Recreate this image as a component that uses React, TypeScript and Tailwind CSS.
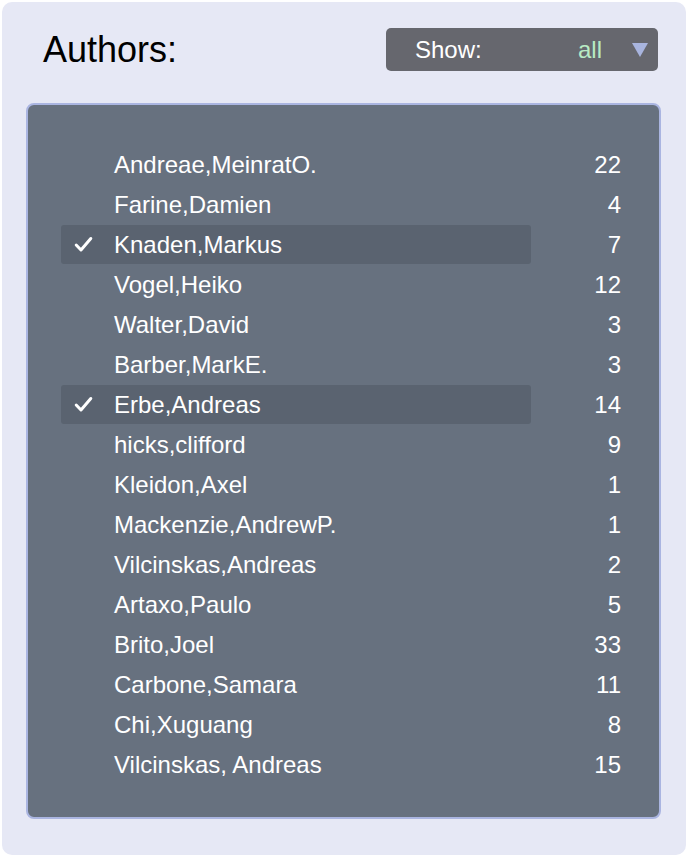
const authors: { name: string; count: number; selected?: boolean }[] = [
  { name: 'Andreae,MeinratO.', count: 22 },
  { name: 'Farine,Damien', count: 4 },
  { name: 'Knaden,Markus', count: 7, selected: true },
  { name: 'Vogel,Heiko', count: 12 },
  { name: 'Walter,David', count: 3 },
  { name: 'Barber,MarkE.', count: 3 },
  { name: 'Erbe,Andreas', count: 14, selected: true },
  { name: 'hicks,clifford', count: 9 },
  { name: 'Kleidon,Axel', count: 1 },
  { name: 'Mackenzie,AndrewP.', count: 1 },
  { name: 'Vilcinskas,Andreas', count: 2 },
  { name: 'Artaxo,Paulo', count: 5 },
  { name: 'Brito,Joel', count: 33 },
  { name: 'Carbone,Samara', count: 11 },
  { name: 'Chi,Xuguang', count: 8 },
  { name: 'Vilcinskas, Andreas', count: 15 },
]

const Check = () => (
  <svg width="19" height="17" viewBox="0 0 19 17" fill="none">
    <path d="M2.2 9 L7 14 L16.8 2.5" stroke="white" strokeWidth="3" strokeLinecap="round" strokeLinejoin="round" />
  </svg>
)

export default function App() {
  return (
    <div className="min-h-screen bg-white p-[2px]" style={{ fontFamily: '"Liberation Sans", Arial, sans-serif' }}>
      <div className="w-[684px] h-[853px] rounded-[10px] bg-[#e6e8f5] pl-[24px] pr-[25px] pt-[26px]">
        <div className="flex items-center justify-between pr-[3px]">
          <h1 className="ml-[17px] text-[36px] leading-none text-black">Authors:</h1>
          <button className="flex h-[43px] w-[272px] items-center rounded-[5px] bg-[#66676e] pl-[29px] pr-[10px] text-[24px] text-white">
            <span>Show:</span>
            <span className="ml-auto mr-[30px] text-[#b8eac4]">all</span>
            <svg width="16" height="14" viewBox="0 0 16 14">
              <path d="M0 0 H16 L8 14 Z" fill="#a8b4de" />
            </svg>
          </button>
        </div>

        <div className="mt-[32px] h-[716px] rounded-[8px] border-2 border-[#aab5e1] bg-[#67717f] pl-[33px] pr-[38px] pt-[39px]">
          {authors.map((a) => (
            <div key={a.name} className="flex h-10 items-center text-[24px] text-white">
              <div
                className={`flex h-[39px] w-[470px] items-center rounded-[3px] ${a.selected ? 'bg-[#5a6370]' : ''}`}
              >
                <span className="ml-[13px] flex w-[40px] items-center">{a.selected && <Check />}</span>
                <span className="pt-[2px]">{a.name}</span>
              </div>
              <span className="ml-auto pt-[2px]">{a.count}</span>
            </div>
          ))}
        </div>
      </div>
    </div>
  )
}
